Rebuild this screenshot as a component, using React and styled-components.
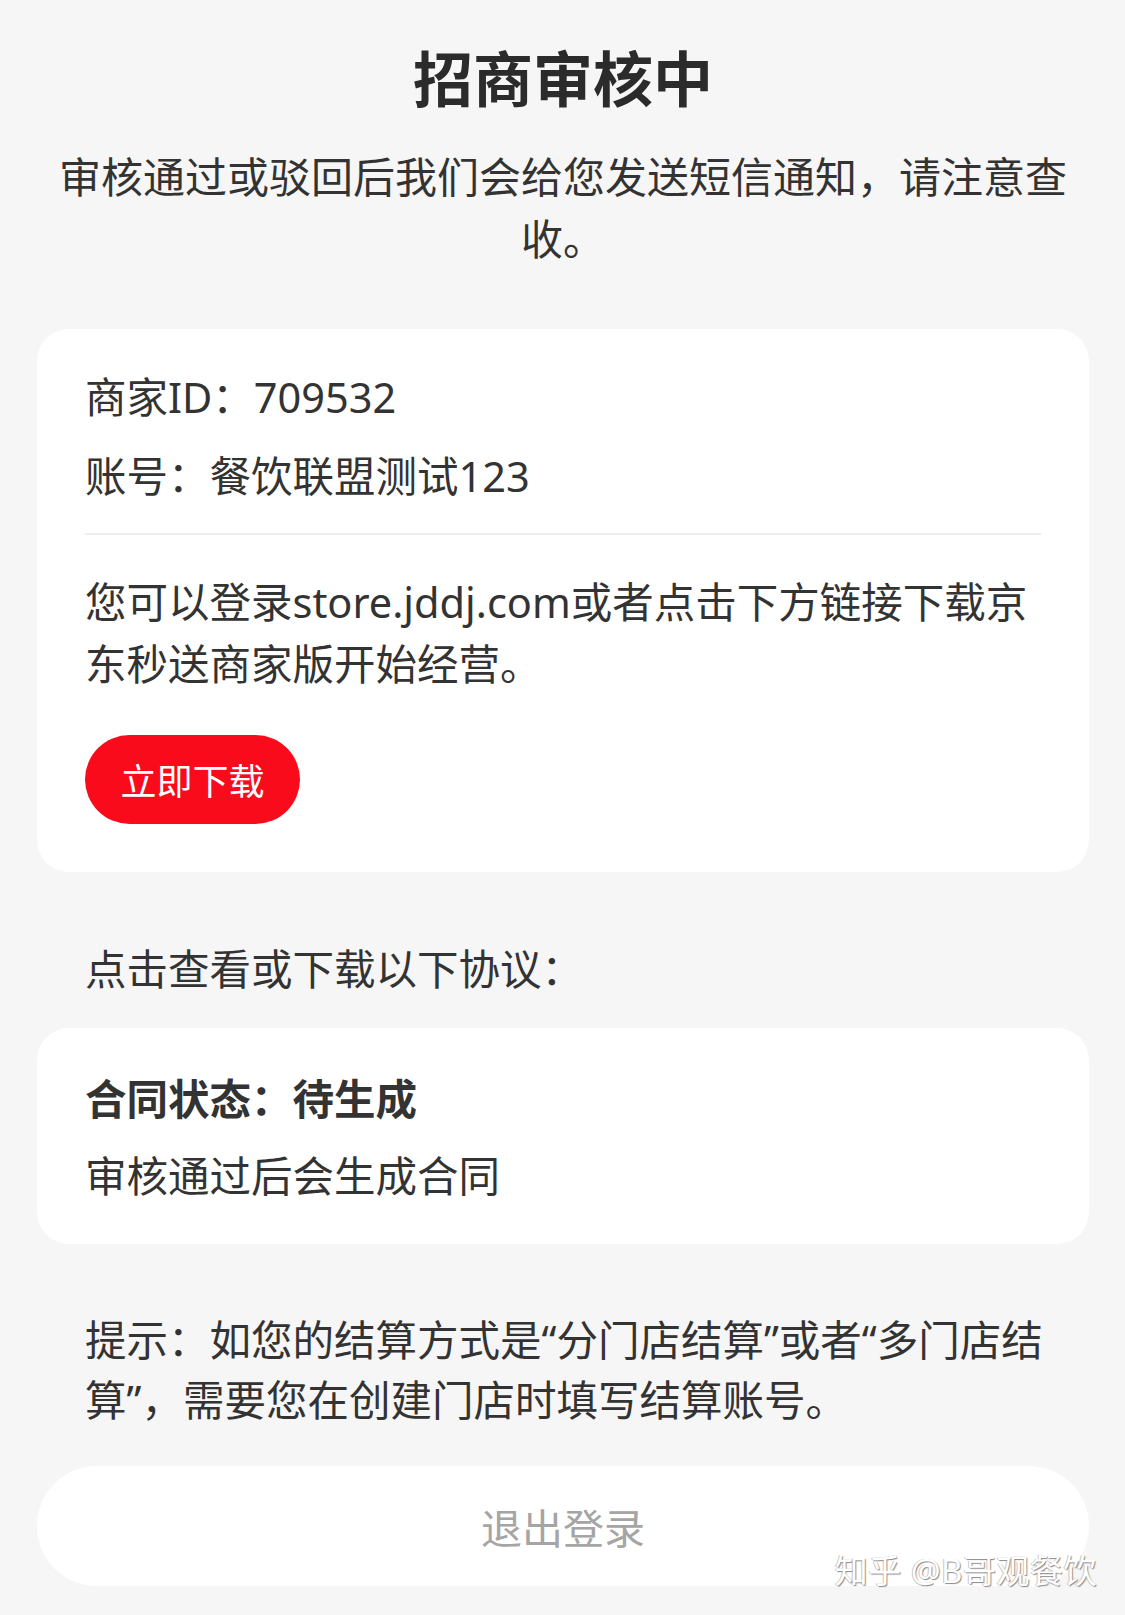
import styled, { createGlobalStyle } from "styled-components";

const GlobalStyle = createGlobalStyle`
  html, body {
    margin: 0;
    padding: 0;
    background: #f6f6f6;
  }
  body {
    font-family: "Noto Sans", "Noto Sans CJK SC", sans-serif;
    color: #333;
  }
`;

const Page = styled.div`
  position: relative;
  width: 1125px;
  min-height: 1615px;
  box-sizing: border-box;
  padding: 43px 36px 30px 37px;
  background: #f6f6f6;
`;

const Title = styled.h1`
  margin: 0;
  font-size: 60px;
  line-height: 72px;
  font-weight: 700;
  text-align: center;
  color: #2b2b2b;
`;

const Subtitle = styled.p`
  margin: 31px auto 0;
  width: 1025px;
  font-size: 42px;
  line-height: 62px;
  text-align: center;
  color: #333;
`;

const Card = styled.div`
  margin-top: ${(p) => p.$top}px;
  background: #fff;
  border-radius: 32px;
  padding: ${(p) => p.$pad};
  display: flex;
  flex-direction: column;
  align-items: flex-start;
`;

const Row = styled.div`
  font-size: 41.5px;
  line-height: 56px;
  color: #333;
  font-weight: ${(p) => (p.$bold ? 700 : 400)};
  margin-top: ${(p) => p.$gap || 0}px;
`;

const Divider = styled.div`
  align-self: stretch;
  height: 2px;
  background: #eeeeee;
  margin: 29px 0 36px;
`;

const Paragraph = styled.p`
  margin: 0;
  font-size: 41.5px;
  line-height: 62px;
  color: #333;
`;

const RedButton = styled.button`
  margin-top: 40px;
  width: 215px;
  height: 89px;
  border: none;
  border-radius: 45px;
  background: #fa0b1c;
  color: #fff;
  font-family: inherit;
  font-size: 36px;
  padding: 0;
`;

const SectionLabel = styled.div`
  margin-top: 69px;
  padding-left: 48px;
  font-size: 41.5px;
  line-height: 56px;
  color: #333;
`;

const Hint = styled.p`
  margin: 66px 0 0;
  padding: 0 10px 0 48px;
  font-size: 41.5px;
  line-height: 60px;
  color: #333;
`;

const LogoutButton = styled.button`
  display: block;
  margin-top: 36px;
  width: 100%;
  height: 120px;
  border: none;
  border-radius: 60px;
  background: #fff;
  color: #a5a5a5;
  font-family: inherit;
  font-size: 41px;
`;

const Watermark = styled.div`
  position: absolute;
  right: 28px;
  bottom: 28px;
  font-size: 33px;
  line-height: 34px;
  color: #fff;
  text-shadow: 1px 1px 1px #8a8a8a, -1px 0 0 #c8c8c8;
  letter-spacing: 0.5px;
`;

const App = () => {
    return (
        <>
            <GlobalStyle />
            <Page>
                <Title>招商审核中</Title>
                <Subtitle>审核通过或驳回后我们会给您发送短信通知，请注意查收。</Subtitle>

                <Card $top={59} $pad="40px 48px 48px 48px">
                    <Row>商家ID：709532</Row>
                    <Row $gap={23}>账号：餐饮联盟测试123</Row>
                    <Divider />
                    <Paragraph>您可以登录store.jddj.com或者点击下方链接下载京东秒送商家版开始经营。</Paragraph>
                    <RedButton>立即下载</RedButton>
                </Card>

                <SectionLabel>点击查看或下载以下协议：</SectionLabel>

                <Card $top={31} $pad="43px 48px 40px 48px">
                    <Row $bold>合同状态：待生成</Row>
                    <Row $gap={21}>审核通过后会生成合同</Row>
                </Card>

                <Hint>提示：如您的结算方式是“分门店结算”或者“多门店结算”，需要您在创建门店时填写结算账号。</Hint>

                <LogoutButton>退出登录</LogoutButton>
                <Watermark>知乎 @B哥观餐饮</Watermark>
            </Page>
        </>
    );
};

export default App;
